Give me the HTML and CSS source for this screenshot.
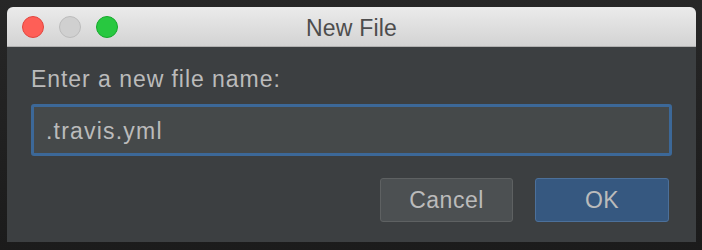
FILE: index.html
```html
<!DOCTYPE html>
<html>
<head>
<meta charset="utf-8">
<link rel="stylesheet" href="styles.css">
</head>
<body>
<div class="window">
  <div class="titlebar">
    <div class="lights">
      <span class="light red"></span>
      <span class="light gray"></span>
      <span class="light green"></span>
    </div>
    <div class="title">New File</div>
  </div>
  <div class="content">
    <div class="label">Enter a new file name:</div>
    <div class="field">.travis.yml</div>
    <div class="buttons">
      <div class="btn cancel">Cancel</div>
      <div class="btn ok">OK</div>
    </div>
  </div>
</div>
</body>
</html>
```
FILE: styles.css
```css
html, body {
  margin: 0;
  padding: 0;
}
body {
  width: 702px;
  height: 250px;
  background: linear-gradient(#272727, #1b1b1b);
  font-family: "Liberation Sans", Arial, sans-serif;
  overflow: hidden;
}
.window {
  margin: 7px 0 0 7px;
  width: 689px;
  height: 235px;
  background: #3c3f41;
  border-radius: 6px 6px 0 0;
  display: flex;
  flex-direction: column;
  overflow: hidden;
}
.titlebar {
  height: 39px;
  flex: none;
  background: linear-gradient(#ebebeb, #d3d3d3);
  border-bottom: 1px solid #b1b1b1;
  display: flex;
  align-items: center;
  position: relative;
}
.lights {
  display: flex;
  gap: 15px;
  padding-left: 15px;
}
.light {
  width: 22px;
  height: 22px;
  border-radius: 50%;
  box-sizing: border-box;
}
.red { background: #fe5f57; border: 1px solid #e2463f; }
.gray { background: #d0d0d0; border: 1px solid #bcbcbc; }
.green { background: #28c840; border: 1px solid #15a92b; }
.title {
  position: absolute;
  left: 0;
  right: 0;
  text-align: center;
  font-size: 23px;
  letter-spacing: 0.2px;
  color: #4d4d4d;
  top: 8px;
}
.content {
  padding: 19px 24px 0 24px;
  display: flex;
  flex-direction: column;
}
.label {
  font-size: 23px;
  letter-spacing: 0.95px;
  color: #bbbbbb;
  line-height: 26px;
  height: 26px;
}
.field {
  margin-top: 12px;
  width: 641px;
  height: 52px;
  box-sizing: border-box;
  border: 3px solid #3c6898;
  border-radius: 3px;
  background: #45494a;
  color: #bbbbbb;
  font-size: 23px;
  letter-spacing: 1.2px;
  padding-left: 12px;
  padding-top: 3px;
  display: flex;
  align-items: center;
}
.buttons {
  margin-top: 22px;
  display: flex;
  gap: 22px;
  justify-content: flex-end;
  padding-right: 3px;
}
.btn {
  height: 44px;
  box-sizing: border-box;
  border-radius: 3px;
  display: flex;
  align-items: center;
  justify-content: center;
  font-size: 23px;
  letter-spacing: 0.5px;
  color: #bbbbbb;
  padding-top: 1px;
}
.cancel {
  width: 133px;
  background: #4c5052;
  border: 1px solid #5e6162;
}
.ok {
  width: 134px;
  background: #365880;
  border: 1px solid #4c709a;
}
```
